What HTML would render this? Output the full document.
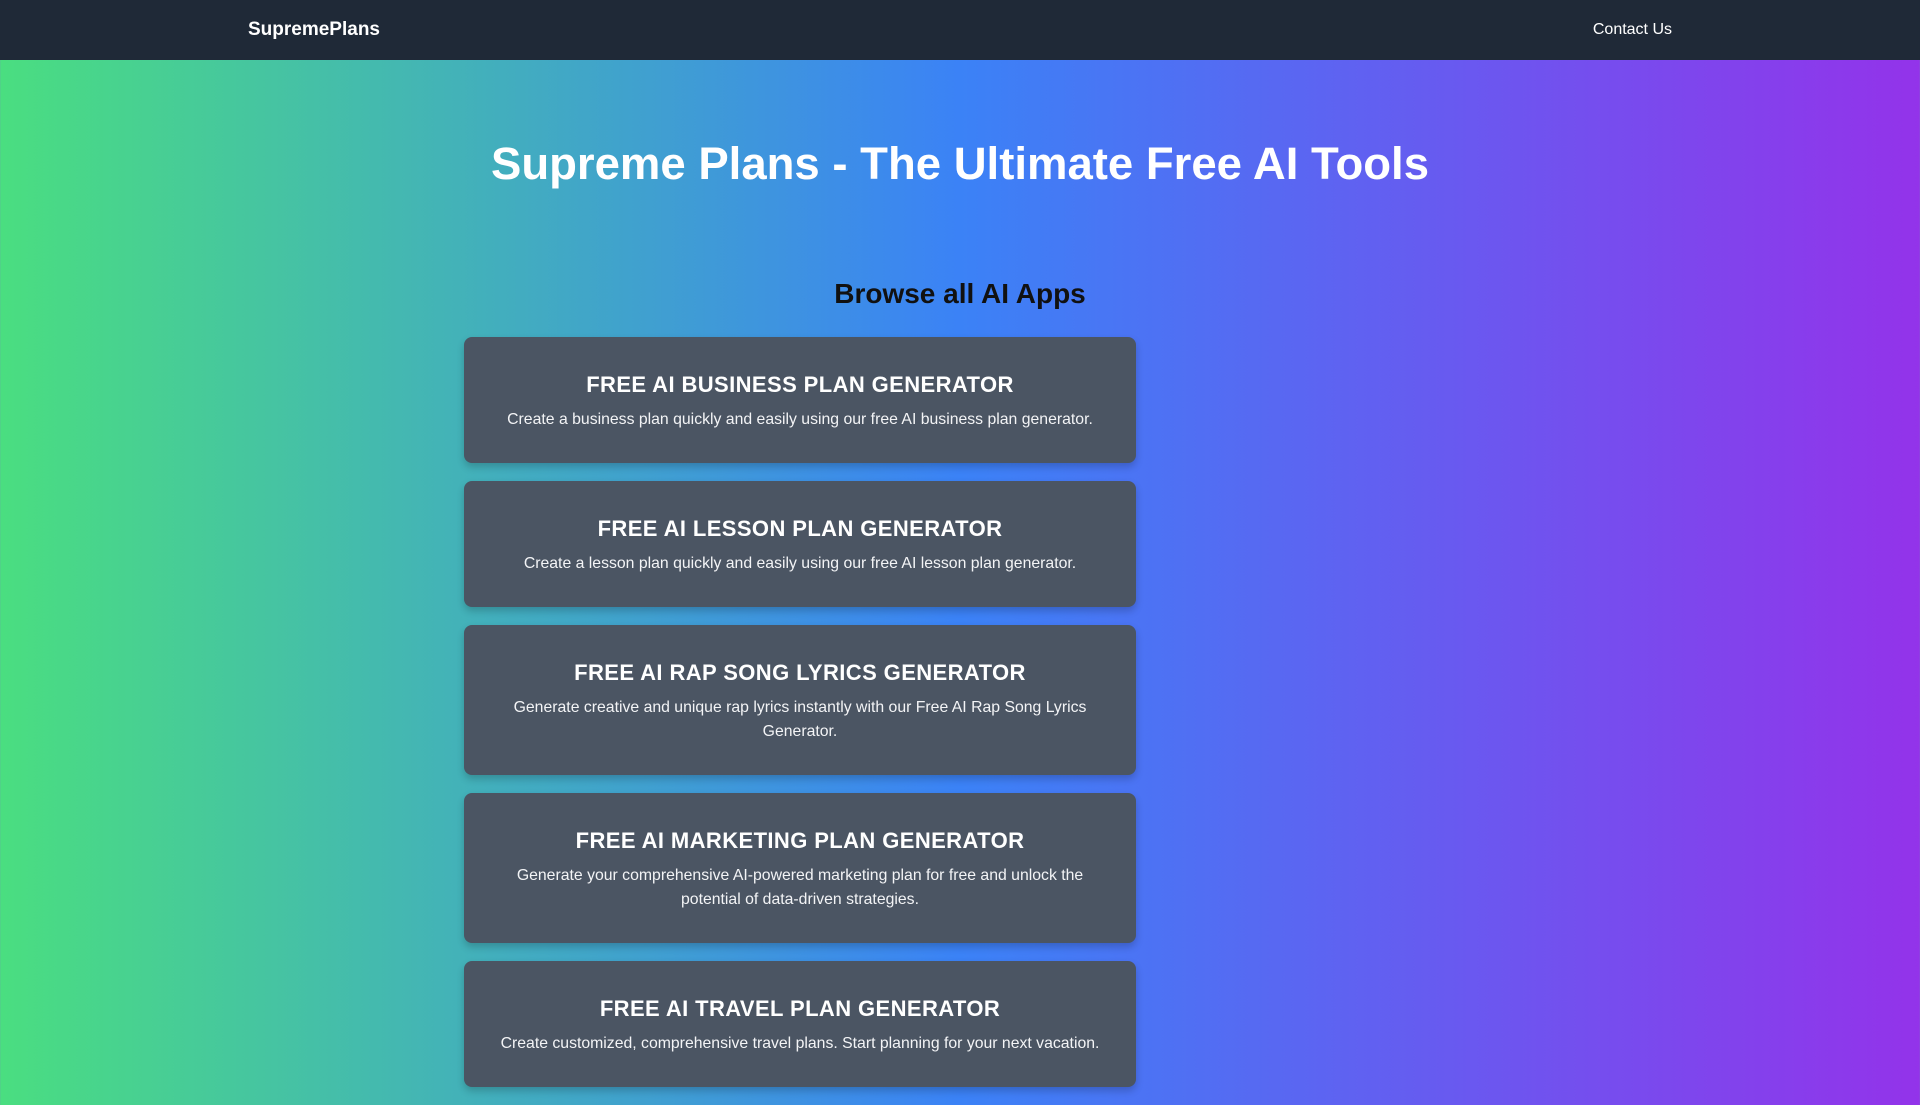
<!DOCTYPE html>
<html><head><meta charset="utf-8"><style>
*{margin:0;padding:0;box-sizing:border-box}
body{width:1920px;height:1080px;overflow:hidden;font-family:"Liberation Sans",Arial,sans-serif;background:linear-gradient(90deg,#4ade80 0%,#3b82f6 50%,#9333ea 100%);}
nav{height:60px;background:#1f2937;position:relative;color:#fff}
.logo{position:absolute;left:248px;top:19px;font-size:19px;font-weight:bold}
.contact{position:absolute;right:248px;top:21px;font-size:16px}
h1{position:absolute;top:138px;width:100%;text-align:center;color:#fff;font-size:45.5px;font-weight:bold}
h2{position:absolute;top:275px;width:100%;text-align:center;color:#111;font-size:28px;font-weight:bold;line-height:38px}
.cards{position:absolute;left:464px;top:337px;width:672px}
.card{background:#4b5563;border-radius:8px;padding:32px 24px 31px;margin-bottom:18px;text-align:center;color:#fff;box-shadow:0 4px 8px rgba(0,0,0,.2)}
.card h3{font-size:22px;line-height:32px;font-weight:bold;letter-spacing:.4px;margin-bottom:7px}
.card p{font-size:15.8px;line-height:24px;color:#f3f4f6}
.card p.w{padding:0 12px}
</style></head><body>
<nav><div class="logo">SupremePlans</div><div class="contact">Contact Us</div></nav>
<h1>Supreme Plans - The Ultimate Free AI Tools</h1>
<h2>Browse all AI Apps</h2>
<div class="cards">
<div class="card"><h3>FREE AI BUSINESS PLAN GENERATOR</h3><p>Create a business plan quickly and easily using our free AI business plan generator.</p></div>
<div class="card"><h3>FREE AI LESSON PLAN GENERATOR</h3><p>Create a lesson plan quickly and easily using our free AI lesson plan generator.</p></div>
<div class="card"><h3>FREE AI RAP SONG LYRICS GENERATOR</h3><p class="w">Generate creative and unique rap lyrics instantly with our Free AI Rap Song Lyrics Generator.</p></div>
<div class="card"><h3>FREE AI MARKETING PLAN GENERATOR</h3><p class="w">Generate your comprehensive AI-powered marketing plan for free and unlock the potential of data-driven strategies.</p></div>
<div class="card"><h3>FREE AI TRAVEL PLAN GENERATOR</h3><p>Create customized, comprehensive travel plans. Start planning for your next vacation.</p></div>
</div>
</body></html>
